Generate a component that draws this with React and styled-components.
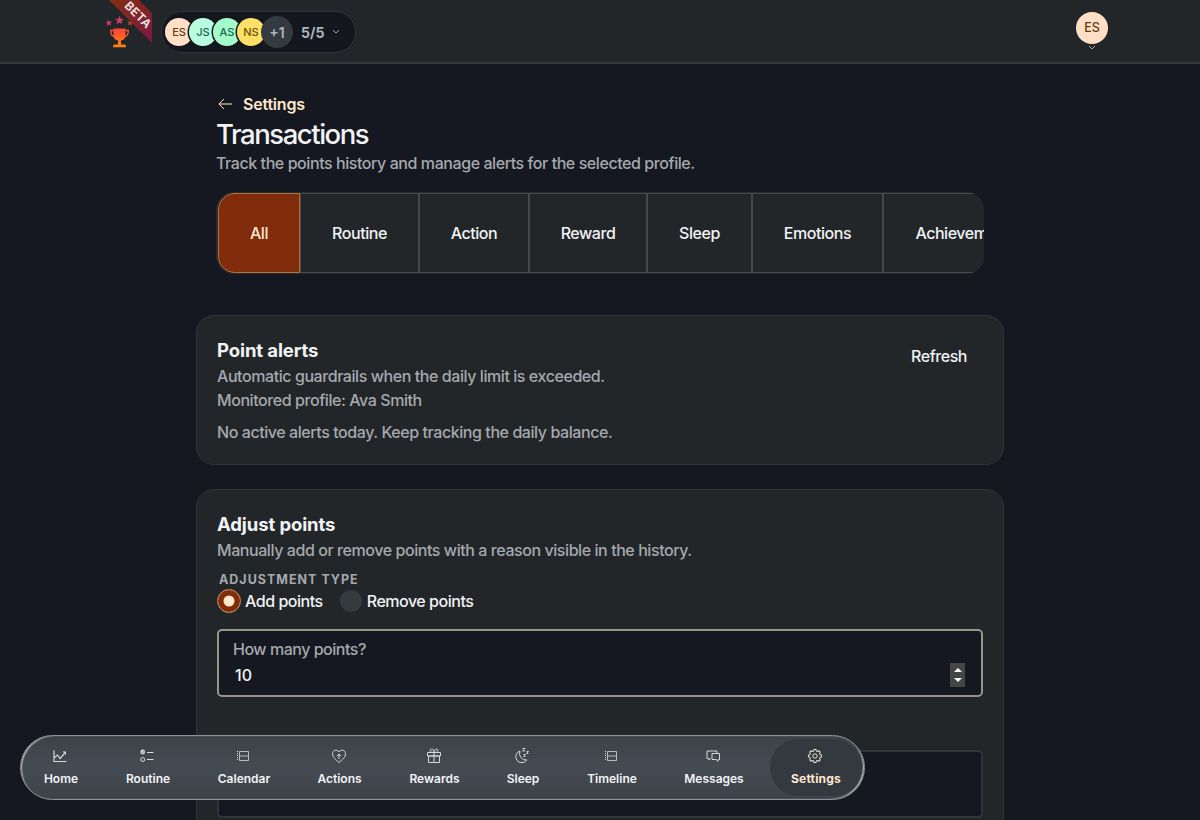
import React from "react";
import styled, { createGlobalStyle } from "styled-components";

const GlobalStyle = createGlobalStyle`
  * {
    box-sizing: border-box;
  }
  html,
  body {
    margin: 0;
    height: 820px;
    overflow: hidden;
    background: #151820;
  }
  body {
    font-family: Inter, "Liberation Sans", sans-serif;
    font-size: 16px;
    font-weight: 450;
    line-height: 24px;
    color: #f1f3f5;
  }
  h1, h2, p {
    margin: 0;
  }
`;

const Page = styled.div`
  height: 820px;
  overflow: hidden;
`;

const Header = styled.header`
  display: flex;
  justify-content: space-between;
  height: 64px;
  padding: 0 92px 0 104px;
  background: #222629;
  border-bottom: 2px solid #373b3f;
`;

const Brand = styled.div`
  display: flex;
`;

const Logo = styled.div`
  position: relative;
  width: 48px;
  height: 48px;
`;

const Ribbon = styled.span`
  position: absolute;
  top: 8px;
  left: 16px;
  width: 36px;
  color: #e9dfe1;
  font-size: 12px;
  font-weight: 700;
  letter-spacing: 0.3px;
  line-height: 14px;
  text-align: center;
  transform: rotate(45deg);
`;

const Profiles = styled.div`
  display: flex;
  align-items: center;
  width: 195px;
  height: 42px;
  margin: 11px 0 0 9px;
  padding-left: 3px;
  background: #14181e;
  border: 1px solid #303438;
  border-radius: 21px;
`;

const Avatar = styled.span`
  display: flex;
  align-items: center;
  justify-content: center;
  flex: none;
  width: ${(p) => p.$size || 28}px;
  height: ${(p) => p.$size || 28}px;
  margin-right: ${(p) => (p.$size ? 0 : -4)}px;
  border-radius: 50%;
  background: ${(p) => p.$bg};
  color: ${(p) => p.$color};
  font-size: ${(p) => (p.$size ? 12.5 : 11)}px;
  font-weight: 500;
  box-shadow: ${(p) => (p.$size ? "none" : "0 0 0 1.5px #14181e")};
`;

const More = styled.span`
  display: flex;
  align-items: center;
  justify-content: center;
  width: 32px;
  height: 32px;
  padding-top: 2px;
  border-radius: 50%;
  background: #343a40;
  color: #adb5bd;
  font-size: 14px;
  font-weight: 600;
`;

const Count = styled.span`
  margin: 2px 8px 0;
  color: #adb5bd;
  font-size: 14px;
  font-weight: 700;
`;

const Account = styled.div`
  display: flex;
  flex-direction: column;
  align-items: center;
  padding-top: 12px;
`;

const Content = styled.main`
  width: 808px;
  margin: 0 auto;
`;

const Intro = styled.section`
  padding: 28px 20px 0;
`;

const BackLink = styled.a`
  display: flex;
  align-items: center;
  gap: 11px;
  height: 24px;
  padding-left: 2px;
  color: #ffe8cc;
  font-weight: 600;
  letter-spacing: -0.2px;
`;

const Title = styled.h1`
  height: 35px;
  font-size: 27.5px;
  font-weight: 450;
  line-height: 37px;
  letter-spacing: -1.45px;
`;

const Text = styled.p`
  color: #a5a9ad;
  letter-spacing: -0.43px;
`;

const Tabs = styled.div`
  display: flex;
  height: 82px;
  margin: 17px 0 0;
  padding: 1px 0 1px 2px;
  border-radius: 18px;
  background: #282c2f;
  overflow: hidden;
`;

const Tab = styled.button`
  flex: none;
  width: ${(p) => p.$width}px;
  padding: 0;
  border: 1px solid ${(p) => (p.$active ? "#b0713f" : "#45494d")};
  border-radius: ${(p) => (p.$active ? "17px 0 0 17px" : 0)};
  background: ${(p) => (p.$active ? "#812c0a" : "#222629")};
  color: ${(p) => (p.$active ? "#ffe8cc" : "#f1f3f5")};
  font: inherit;
  font-weight: 500;
  letter-spacing: -0.45px;
`;

const Card = styled.section`
  height: ${(p) => p.$height}px;
  margin-top: ${(p) => p.$top}px;
  padding: 22px 20px;
  background: #222629;
  border: 1px solid #303438;
  border-radius: 18px;
`;

const CardHead = styled.div`
  display: flex;
  justify-content: space-between;
`;

const CardTitle = styled.h2`
  margin-bottom: 2px;
  font-size: 18.5px;
  font-weight: 700;
  line-height: 24px;
  letter-spacing: -0.1px;
`;

const Refresh = styled.button`
  height: 36px;
  padding: 0 16px;
  border: 0;
  background: none;
  color: #f1f3f5;
  font: inherit;
  font-weight: 500;
  letter-spacing: -0.45px;
`;

const Status = styled(Text)`
  margin-top: 8px;
`;

const Legend = styled.div`
  margin-top: 9px;
  padding-left: 2px;
  color: #a5a9ad;
  font-size: 12.5px;
  font-weight: 700;
  line-height: 17px;
  letter-spacing: 1px;
`;

const Options = styled.div`
  display: flex;
  align-items: center;
  gap: 17px;
  height: 26px;
`;

const Option = styled.label`
  display: flex;
  align-items: center;
  gap: 4px;
  letter-spacing: -0.47px;
`;

const Radio = styled.span`
  width: ${(p) => (p.$checked ? 24 : 22)}px;
  height: ${(p) => (p.$checked ? 24 : 22)}px;
  margin-right: ${(p) => (p.$checked ? 0 : 1)}px;
  border-radius: 50%;
  background: ${(p) => (p.$checked ? "#ffe8cc" : "#343a3d")};
  border: ${(p) => (p.$checked ? "1px solid #b0713f" : 0)};
  box-shadow: ${(p) => (p.$checked ? "inset 0 0 0 5.5px #812c0a" : "none")};
`;

const Field = styled.div`
  display: flex;
  justify-content: space-between;
  height: 68px;
  margin-top: ${(p) => p.$top}px;
  padding: 6px 16px 0 14px;
  background: #151820;
  border: 2px solid ${(p) => (p.$focus ? "#999689" : "#303539")};
  border-radius: 5px;
`;

const FieldLabel = styled.div`
  color: #a5a9ad;
  letter-spacing: -0.48px;
`;

const Value = styled.div`
  margin-top: 2px;
  padding-left: 2px;
`;

const Spinner = styled.div`
  display: flex;
  align-items: center;
  justify-content: center;
  width: 15px;
  height: 24px;
  margin-top: 26px;
  background: #454545;
`;

const Dock = styled.nav`
  position: absolute;
  top: 735px;
  left: 20px;
  display: flex;
  width: 845px;
  height: 65px;
  padding: 3px;
  border: 1px solid #8d9298;
  border-radius: 33px;
  background: linear-gradient(180deg, #3d4249, #454b52 50%, #3d4249);
  box-shadow: inset 2px 1px 1px -1px #b5b9be, inset -2px -1px 1px -1px #b5b9be;
`;

const DockItem = styled.a`
  display: flex;
  flex-direction: column;
  align-items: center;
  flex: none;
  width: ${(p) => p.$width}px;
  padding-top: 9px;
  border-radius: 30px;
  background: ${(p) => (p.$active ? "#343940" : "none")};
  color: ${(p) => (p.$active ? "#ffe8cc" : "#f1f3f5")};
  font-size: 12px;
  font-weight: ${(p) => (p.$active ? 700 : 600)};
  letter-spacing: ${(p) => (p.$active ? 0.2 : 0)}px;
  line-height: 18px;
`;

const DockIcon = styled.svg`
  width: 16px;
  height: 16px;
  margin: 0 2px 6px 0;
  fill: none;
  stroke: ${(p) => (p.$active ? "#e6dccb" : "#d5d8dc")};
  stroke-width: 1;
`;

const tabs = [
  ["All", 82],
  ["Routine", 119],
  ["Action", 110],
  ["Reward", 118],
  ["Sleep", 105],
  ["Emotions", 131],
  ["Achievements", 168],
];

const people = [
  ["ES", "#ffe0c7", "#5f3b12"],
  ["JS", "#b9fde0", "#17684c"],
  ["AS", "#a4fbc9", "#17684c"],
  ["NS", "#ffe066", "#665200"],
];

const listIcon = (
  <>
    <path d="M4.5 3.5h9v9h-9zM4.500 8h9" strokeOpacity="0.8" />
    <path d="M2.500 3v10" strokeDasharray="1 1" />
  </>
);

const navItems = [
  [
    "Home",
    74,
    <>
      <path d="M2 2.500v11h12.500M2.500 9.500l3-2.500 2.500 3.500 4.500-5" strokeWidth="1.200" />
      <path d="M10.500 3.500H14V7z" fill="#d5d8dc" stroke="none" />
    </>,
  ],
  [
    "Routine",
    100,
    <>
      <circle cx="3.700" cy="4" r="2.400" fill="#d5d8dc" stroke="none" />
      <path d="m2.700 4 .8.800 1.400-1.500" stroke="#41464d" strokeWidth=".7" />
      <circle cx="3.700" cy="11.500" r="2" />
      <path d="M8 4.500h6.500M8 11.500h6.500" />
    </>,
  ],
  ["Calendar", 92, listIcon],
  [
    "Actions",
    99,
    <path d="M8 14.500C5 12 1.600 9.500 1.600 5.800 1.600 2 6 .8 8 4c2-3.200 6.400-2 6.400 1.800C14.400 9.500 11 12 8 14.500zM8 11V6M5.800 8.200 8 6l2.200 2.200" />,
  ],
  [
    "Rewards",
    91,
    <path d="M1.500 4.500h13v3.500h-13zM2.500 8h11v6.500h-11zM8 4.500v10M8 4.500C3 4.500 3.500 1 5.500 1S8 3 8 4.500zM8 4.500c5 0 4.500-3.500 2.500-3.500S8 3 8 4.500z" />,
  ],
  [
    "Sleep",
    86,
    <>
      <path d="M6 3a6 6 0 1 0 6.800 9A6.500 6.500 0 0 1 6 3z" />
      <path d="M8.500.5H11L8.500 3H11M12.500 3.500h2l-2 2h2M9.500 6.500h2l-2 2h2" strokeWidth=".9" />
    </>,
  ],
  ["Timeline", 92, listIcon],
  [
    "Messages",
    112,
    <>
      <path d="M6 10.500H5.500l-1.500 1.500v-1.500H2v-7.500h10v2" strokeLinejoin="round" />
      <path d="M7 5.500h7.500v6h-1.500v1.800l-2-1.800H7z" strokeLinejoin="round" />
    </>,
  ],
  [
    "Settings",
    92,
    <>
      <circle cx="8" cy="8" r="2.200" />
      <path
        transform="translate(8 8) scale(1.040) translate(-8 -8)"
        strokeLinejoin="round"
        d="M6.700 3.100 7.100 1.700H8.900L9.300 3.100 10.500 3.600 11.800 2.900 13.100 4.200 12.400 5.500 12.900 6.700 14.300 7.100V8.900L12.900 9.300 12.400 10.500 13.100 11.800 11.800 13.100 10.500 12.400 9.300 12.900 8.900 14.300H7.100L6.700 12.900 5.500 12.400 4.200 13.100 2.900 11.800 3.600 10.500 3.100 9.300 1.700 8.900V7.100L3.100 6.700 3.600 5.500 2.900 4.200 4.200 2.900 5.500 3.600z"
      />
    </>,
  ],
];

const App = () => {
  return (
    <Page>
      <GlobalStyle />
      <Header>
        <Brand>
          <Logo>
            <svg width="48" height="48" viewBox="0 0 48 48">
              <defs>
                <linearGradient id="cup" x1="0" y1="0" x2="0" y2="1">
                  <stop offset="0" stopColor="#ff4238" />
                  <stop offset="1" stopColor="#fa8a10" />
                </linearGradient>
                <linearGradient id="band" x1="0" y1="0" x2="1" y2="1">
                  <stop offset="0" stopColor="#84300d" />
                  <stop offset="1" stopColor="#7b1844" />
                </linearGradient>
              </defs>
              <g fill="#c93b68">
                <path d="m15.500 15.800 1.300 2.900 3.200.3-2.400 2.100.7 3.100-2.800-1.600-2.800 1.600.7-3.100-2.400-2.100 3.200-.3z" />
                <path d="m4.300 19.700 1.400 2 2.400-.4-1.600 1.900 1 2.300-2.300-.9-1.900 1.500.2-2.400-2.100-1.300 2.400-.6z" />
                <path
                  d="m26.700 19.700-1.400 2-2.400-.4 1.600 1.900-1 2.300 2.300-.9 1.900 1.500-.2-2.400 2.100-1.300-2.400-.6z"
                  fill="#a3402f"
                />
              </g>
              <path
                d="M9.500 28.500h12v7c0 3-2 4.500-4.500 5v4h3.500c1 0 1.500 1 1.500 2.800H9c0-1.800.5-2.800 1.500-2.800H14v-4c-2.500-.5-4.500-2-4.500-5z"
                fill="url(#cup)"
              />
              <path
                d="M9.500 30.500H6.700c0 3 .8 5.500 3.300 6M21.500 30.500h2.800c0 3-.8 5.500-3.300 6"
                fill="none"
                stroke="#ff5a2e"
                strokeWidth="1.300"
              />
              <path d="M5 0h30l13 13v30z" fill="url(#band)" />
            </svg>
            <Ribbon>BETA</Ribbon>
          </Logo>
          <Profiles>
            {people.map(([name, bg, color]) => (
              <Avatar key={name} $bg={bg} $color={color}>
                {name}
              </Avatar>
            ))}
            <More>+1</More>
            <Count>5/5</Count>
            <svg width="8" height="6" fill="none" stroke="#a5a9ad">
              <path d="m1 1 3 3 3-3" />
            </svg>
          </Profiles>
        </Brand>
        <Account>
          <Avatar $size={32} $bg="#ffe0c7" $color="#5f3b12">
            ES
          </Avatar>
          <svg width="8" height="6" fill="none" stroke="#a5a9ad">
            <path d="m1 2 3 3 3-3" />
          </svg>
        </Account>
      </Header>
      <Content>
        <Intro>
          <BackLink>
            <svg width="14" height="12" fill="none" stroke="#ffe8cc">
              <path d="M14 6H1M6 1 1 6l5 5" />
            </svg>
            Settings
          </BackLink>
          <Title>Transactions</Title>
          <Text>
            Track the points history and manage alerts for the selected profile.
          </Text>
          <Tabs>
            {tabs.map(([name, width], i) => (
              <Tab key={name} $width={width} $active={i === 0}>
                {name}
              </Tab>
            ))}
          </Tabs>
        </Intro>
        <Card $height={150} $top={41}>
          <CardHead>
            <div>
              <CardTitle>Point alerts</CardTitle>
              <Text>Automatic guardrails when the daily limit is exceeded.</Text>
              <Text>Monitored profile: Ava Smith</Text>
            </div>
            <Refresh>Refresh</Refresh>
          </CardHead>
          <Status>No active alerts today. Keep tracking the daily balance.</Status>
        </Card>
        <Card $height={360} $top={24}>
          <CardTitle>Adjust points</CardTitle>
          <Text>
            Manually add or remove points with a reason visible in the history.
          </Text>
          <Legend>ADJUSTMENT TYPE</Legend>
          <Options>
            <Option>
              <Radio $checked />
              Add points
            </Option>
            <Option>
              <Radio />
              Remove points
            </Option>
          </Options>
          <Field $top={15} $focus>
            <div>
              <FieldLabel>How many points?</FieldLabel>
              <Value>10</Value>
            </div>
            <Spinner>
              <svg width="8" height="16" fill="#fff">
                <path d="M0 5h8L4 1zM0 11h8l-4 4z" />
              </svg>
            </Spinner>
          </Field>
          <Field $top={53} />
        </Card>
      </Content>
      <Dock>
        {navItems.map(([name, width, icon]) => (
          <DockItem key={name} $width={width} $active={name === "Settings"}>
            <DockIcon viewBox="0 0 16 16" $active={name === "Settings"}>
              {icon}
            </DockIcon>
            {name}
          </DockItem>
        ))}
      </Dock>
    </Page>
  );
};

export default App;
